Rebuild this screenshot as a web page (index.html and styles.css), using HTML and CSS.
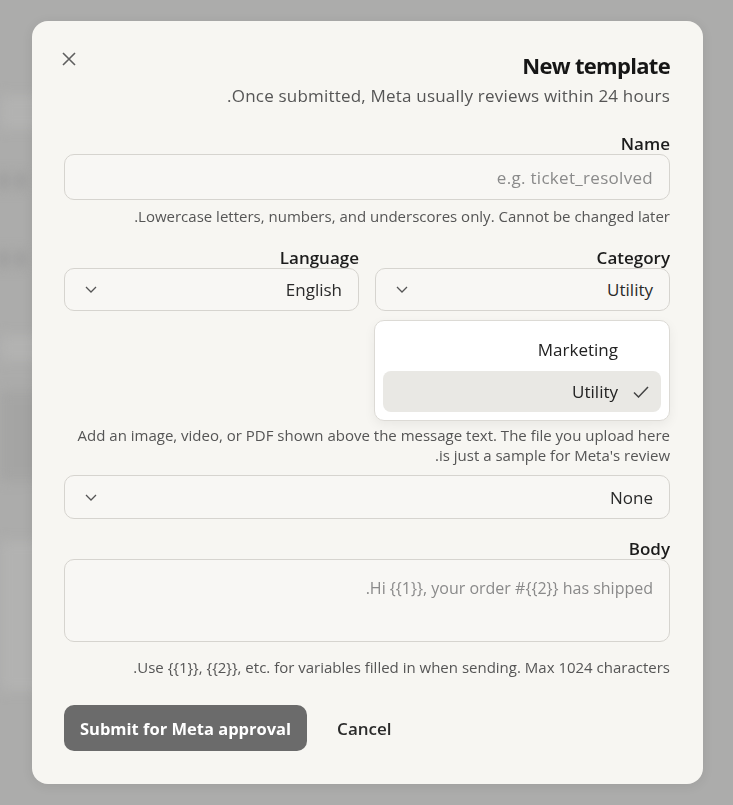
FILE: index.html
```html
<!DOCTYPE html>
<html lang="en" dir="rtl">
<head>
    <meta charset="UTF-8">
    <meta name="viewport" content="width=device-width, initial-scale=1.0">
    <title>New template</title>
    <link rel="stylesheet" href="styles.css">
</head>
<body>

    <!-- Page behind the dialog, blurred by the overlay -->
    <div class="backdrop">
        <div class="bd-row bd-light"></div>
        <div class="bd-row bd-icons"><span></span><span></span></div>
        <div class="bd-row bd-icons bd-two"><span></span><span></span></div>
        <div class="bd-row bd-light bd-mid"></div>
        <div class="bd-row bd-dark"></div>
        <div class="bd-row bd-light bd-low"></div>
    </div>

    <div class="overlay">
        <div class="dialog">
            <button class="close" aria-label="Close">
                <svg width="14" height="14" viewBox="0 0 14 14"><path d="M1 1 L13 13 M13 1 L1 13" stroke="#5f5f5f" stroke-width="1.6" fill="none"/></svg>
            </button>

            <h2 class="title">New template</h2>
            <p class="subtitle">Once submitted, Meta usually reviews within 24 hours.</p>

            <div class="field field-name">
                <label class="label">Name</label>
                <div class="input"><span class="placeholder">e.g. ticket_resolved</span></div>
                <p class="hint">Lowercase letters, numbers, and underscores only. Cannot be changed later.</p>
            </div>

            <div class="field-row">
                <div class="field">
                    <label class="label">Category</label>
                    <div class="select-wrap">
                        <div class="select">
                            <span>Utility</span>
                            <svg class="chevron" width="12" height="7" viewBox="0 0 12 7"><path d="M1 1 L6 6 L11 1" stroke="#555" stroke-width="1.3" fill="none"/></svg>
                        </div>
                        <ul class="menu">
                            <li class="menu-item"><span class="check"></span><span>Marketing</span></li>
                            <li class="menu-item selected">
                                <span class="check"><svg width="16" height="12" viewBox="0 0 16 12"><path d="M1 6.5 L5.5 11 L15 1" stroke="#444" stroke-width="1.5" fill="none"/></svg></span>
                                <span>Utility</span>
                            </li>
                        </ul>
                    </div>
                </div>
                <div class="field">
                    <label class="label">Language</label>
                    <div class="select">
                        <span>English</span>
                        <svg class="chevron" width="12" height="7" viewBox="0 0 12 7"><path d="M1 1 L6 6 L11 1" stroke="#555" stroke-width="1.3" fill="none"/></svg>
                    </div>
                </div>
            </div>

            <div class="field field-media">
                <p class="hint hint-block">Add an image, video, or PDF shown above the message text. The file you upload here is just a sample for Meta's review.</p>
                <div class="select select-wide">
                    <span>None</span>
                    <svg class="chevron" width="12" height="7" viewBox="0 0 12 7"><path d="M1 1 L6 6 L11 1" stroke="#555" stroke-width="1.3" fill="none"/></svg>
                </div>
            </div>

            <div class="field field-body">
                <label class="label">Body</label>
                <div class="textarea"><span class="placeholder">Hi {{1}}, your order #{{2}} has shipped.</span></div>
                <p class="hint hint-gap">Use {{1}}, {{2}}, etc. for variables filled in when sending. Max 1024 characters.</p>
            </div>

            <div class="actions">
                <button class="btn-primary">Submit for Meta approval</button>
                <button class="btn-cancel">Cancel</button>
            </div>
        </div>
    </div>

</body>
</html>
```

FILE: styles.css
```css
/* Basic reset */
* {
    margin: 0;
    padding: 0;
    box-sizing: border-box;
}

body {
    font-family: "Open Sans", Roboto, sans-serif;
    background-color: #acacab;
    color: #1c1c1c;
    height: 100vh;
    overflow: hidden;
}

/* Blurred page behind the dialog */
.backdrop {
    position: fixed;
    top: 0;
    bottom: 0;
    left: 0;
    width: 120px;
    filter: blur(6px);
}

.bd-row {
    height: 40px;
    margin-top: 20px;
}

.bd-light {
    background-color: #b2b2b1;
    margin-top: 95px;
    height: 34px;
}

.bd-icons {
    display: flex;
    gap: 10px;
    padding-right: 96px;
    margin-top: 42px;
    height: 30px;
}

.bd-icons span {
    width: 20px;
    height: 20px;
    border-radius: 50%;
    background-color: #959595;
}

.bd-two {
    margin-top: 48px;
}

.bd-mid {
    margin-top: 56px;
    height: 26px;
}

.bd-dark {
    background-color: #a4a4a3;
    height: 90px;
    margin-top: 30px;
}

.bd-low {
    margin-top: 60px;
    height: 150px;
}

/* Dialog */
.overlay {
    position: fixed;
    inset: 0;
    display: flex;
    justify-content: center;
    align-items: center;
    padding-left: 2px;
}

.dialog {
    position: relative;
    width: 671px;
    background-color: #f7f6f2;
    border-radius: 16px;
    padding: 30px 33px 33px 32px;
    box-shadow: 0 2px 12px rgba(0, 0, 0, 0.08);
}

.close {
    position: absolute;
    top: 31px;
    left: 30px;
    background: none;
    border: none;
    width: 14px;
    height: 14px;
    cursor: pointer;
}

.title {
    font-size: 22px;
    line-height: 28px;
    font-weight: 700;
    color: #161616;
    letter-spacing: -0.7px;
}

.subtitle {
    margin-top: 6px;
    font-size: 17px;
    line-height: 22px;
    color: #555;
    letter-spacing: 0.2px;
}

.label {
    display: block;
    font-size: 17px;
    line-height: 20px;
    font-weight: 600;
    color: #1c1c1c;
}

.field-name {
    margin-top: 27px;
}

.input,
.select,
.textarea {
    border: 1px solid #d6d4cf;
    border-radius: 10px;
    background-color: #f8f7f4;
    font-size: 17px;
    color: #2a2a2a;
}

.input {
    height: 46px;
    padding: 0 16px;
    display: flex;
    align-items: center;
}

.placeholder {
    color: #8a8a8a;
}

.input .placeholder {
    letter-spacing: 0.3px;
}

.hint {
    margin-top: 6px;
    font-size: 15px;
    line-height: 20px;
    color: #555;
}

/* Category / Language */
.field-row {
    margin-top: 22px;
    display: grid;
    grid-template-columns: 1fr 1fr;
    gap: 16px;
}

.select-wrap {
    position: relative;
}

.select {
    height: 43px;
    padding: 0 16px 0 20px;
    display: flex;
    align-items: center;
    justify-content: space-between;
}

.chevron {
    display: block;
}

.menu {
    position: absolute;
    top: calc(100% + 9px);
    right: 0;
    left: -1px;
    list-style: none;
    background-color: #fff;
    border: 1px solid #dcdad5;
    border-radius: 10px;
    padding: 8px;
    display: flex;
    flex-direction: column;
    gap: 1px;
    box-shadow: 0 4px 12px rgba(0, 0, 0, 0.06);
    z-index: 10;
}

.menu-item {
    height: 41px;
    border-radius: 8px;
    display: flex;
    align-items: center;
    gap: 15px;
    padding: 0 12px;
    font-size: 17px;
    color: #222;
}

.menu-item.selected {
    background-color: #e9e8e4;
}

.check {
    width: 16px;
    display: flex;
    align-items: center;
}

/* Media header */
.field-media {
    margin-top: 114px;
}

.hint-block {
    margin-top: 0;
}

.select-wide {
    margin-top: 10px;
    height: 44px;
}

/* Body */
.field-body {
    margin-top: 20px;
}

.textarea {
    height: 83px;
    padding: 17px 16px;
    font-size: 16px;
}

.hint-gap {
    margin-top: 15px;
}

/* Buttons */
.actions {
    direction: ltr;
    margin-top: 28px;
    display: flex;
    align-items: center;
    gap: 16px;
}

.btn-primary {
    height: 46px;
    padding: 0 16px;
    border: none;
    border-radius: 10px;
    background-color: #6b6b6b;
    color: #fff;
    font-family: inherit;
    font-size: 16.5px;
    font-weight: 700;
    cursor: pointer;
}

.btn-cancel {
    height: 46px;
    padding: 0 14px;
    border: none;
    background: none;
    color: #2a2a2a;
    font-family: inherit;
    font-size: 17px;
    font-weight: 600;
    cursor: pointer;
}
```
